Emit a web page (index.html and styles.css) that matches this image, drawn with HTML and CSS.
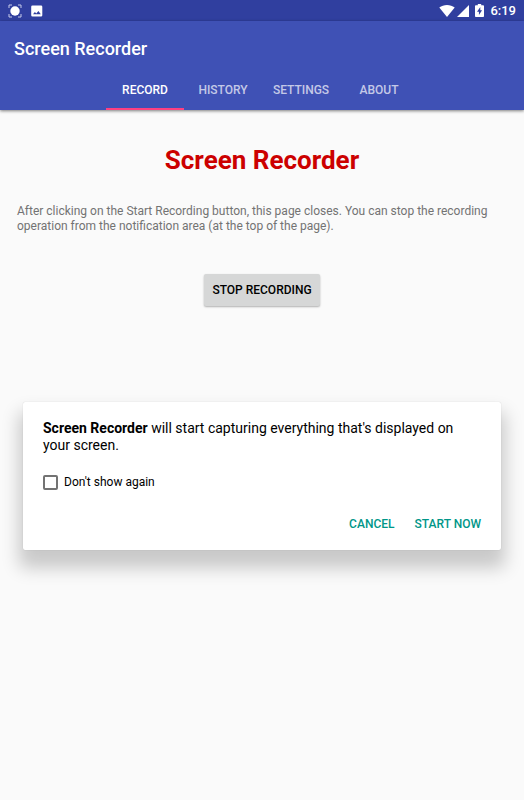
FILE: index.html
```html
<!DOCTYPE html>
<html lang="en">
<head>
    <meta charset="UTF-8">
    <meta name="viewport" content="width=device-width, initial-scale=1.0">
    <title>Screen Recorder</title>
    <link rel="stylesheet" href="styles.css">
</head>
<body>
    <div class="status-bar">
        <div class="status-icons">
            <!-- Recorder -->
            <svg width="14" height="14" viewBox="0 0 14 14">
                <path d="M1 4V1h3M10 1h3v3M13 10v3h-3M4 13H1v-3" fill="none" stroke="#c5cae9"/>
                <circle cx="7" cy="7" r="4.700" fill="#fff"/>
            </svg>
            <!-- Picture -->
            <svg width="12" height="12" viewBox="0 0 12 12">
                <path fill="#fff" fill-rule="evenodd" d="M1.500 0.500h8.500a1.300 1.300 0 0 1 1.300 1.300v8.400a1.300 1.300 0 0 1-1.300 1.300H1.500a1.300 1.300 0 0 1-1.300-1.300V1.800a1.300 1.300 0 0 1 1.300-1.300zM2 9.200h7.800L7.400 6 5.300 8.500 3.900 7z"/>
            </svg>
        </div>
        <div class="status-info">
            <!-- Wifi -->
            <svg width="16" height="12" viewBox="0 0 16 12">
                <path fill="#fff" d="M8 12L0.300 2.600C2.500 0.900 5.100 0 8 0s5.500 0.900 7.700 2.600z"/>
            </svg>
            <!-- Signal -->
            <svg width="12" height="12" viewBox="0 0 12 12">
                <path fill="#fff" d="M0 12L12 0v12z"/>
            </svg>
            <!-- Battery -->
            <svg class="battery" width="9" height="13" viewBox="0 0 8 13" preserveAspectRatio="none">
                <path fill="#fff" d="M2.500 0h3v1.200H7.200a.8.8 0 0 1 .8.8v10.200a.8.8 0 0 1-.8.8H.8a.8.8 0 0 1-.8-.8V2a.8.8 0 0 1 .8-.8h1.700z"/>
                <path fill="#303f9f" d="M4.700 3L1.800 7.700h1.700v3.300l2.800-4.700H4.700z"/>
            </svg>
            <span class="clock">6:19</span>
        </div>
    </div>

    <header class="app-bar">
        <h1 class="app-title">Screen Recorder</h1>
        <nav class="tabs">
            <button class="tab active">RECORD</button>
            <button class="tab">HISTORY</button>
            <button class="tab">SETTINGS</button>
            <button class="tab">ABOUT</button>
        </nav>
    </header>

    <main class="content">
        <h2 class="heading">Screen Recorder</h2>
        <p class="description">After clicking on the Start Recording button, this page closes. You can stop the recording operation from the notification area (at the top of the page).</p>
        <button class="record-button">STOP RECORDING</button>
    </main>

    <div class="dialog" role="dialog">
        <p class="message"><b>Screen Recorder</b> will start capturing everything that's displayed on your screen.</p>
        <label class="remember">
            <input type="checkbox" class="checkbox">
            Don't show again
        </label>
        <div class="actions">
            <button class="action">CANCEL</button>
            <button class="action">START NOW</button>
        </div>
    </div>
</body>
</html>
```

FILE: styles.css
```css
* {
    box-sizing: border-box;
}
body {
    font-family: Roboto, sans-serif;
    margin: 0;
    background-color: #fafafa;
}
h1, h2, p {
    margin: 0;
}
button {
    font-family: inherit;
    font-size: 12px;
    font-weight: 500;
    border: none;
    cursor: pointer;
}
.status-bar {
    display: flex;
    justify-content: space-between;
    align-items: center;
    height: 21px;
    padding: 0 8px;
    background-color: #303f9f;
    color: white;
}
.status-icons,
.status-info {
    display: flex;
    align-items: center;
    gap: 9px;
}
.status-info {
    gap: 2px;
}
.battery {
    margin: 0 4px;
}
.clock {
    font-size: 13px;
    font-weight: 500;
}
.app-bar {
    background-color: #3f51b5;
    color: white;
    box-shadow: 0 1px 3px rgba(0, 0, 0, 0.5);
}
.app-title {
    padding: 8px 14px 0;
    font-size: 18px;
    font-weight: 500;
    line-height: 40px;
}
.tabs {
    display: flex;
    justify-content: center;
}
.tab {
    width: 78px;
    height: 41px;
    padding: 2px 0 0;
    background: none;
    border-bottom: 2px solid transparent;
    color: rgba(255, 255, 255, 0.7);
}
.tab.active {
    color: white;
    border-bottom-color: #ff4081;
}
.content {
    display: flex;
    flex-direction: column;
    align-items: center;
    padding: 34px 17px;
}
.heading {
    color: #cc0000;
    font-size: 26px;
    font-weight: 700;
    line-height: 32px;
}
.description {
    align-self: flex-start;
    margin: 28px 0 40px;
    color: #737373;
    font-size: 12px;
    line-height: 15px;
}
.record-button {
    height: 32px;
    padding: 0 8px;
    background-color: #d6d7d7;
    color: black;
    border-radius: 2px;
    box-shadow: 0 1px 2px rgba(0, 0, 0, 0.3);
}
.dialog {
    position: absolute;
    top: 402px;
    left: 23px;
    right: 23px;
    padding: 18px 10px 10px 20px;
    background-color: white;
    border-radius: 2px;
    box-shadow: 0 0 1px rgba(0, 0, 0, 0.2), 0 14px 18px 4px rgba(0, 0, 0, 0.2);
}
.message {
    padding-right: 30px;
    font-size: 14px;
    line-height: 17px;
}
.remember {
    display: flex;
    align-items: center;
    gap: 6px;
    margin-top: 20px;
    font-size: 12px;
    line-height: 16px;
}
.checkbox {
    appearance: none;
    width: 15px;
    height: 15px;
    margin: 0;
    border: 2px solid #737373;
    border-radius: 2px;
}
.actions {
    display: flex;
    justify-content: flex-end;
    margin-top: 18px;
}
.action {
    height: 32px;
    padding: 0 10px;
    background: none;
    color: #009688;
}
```
